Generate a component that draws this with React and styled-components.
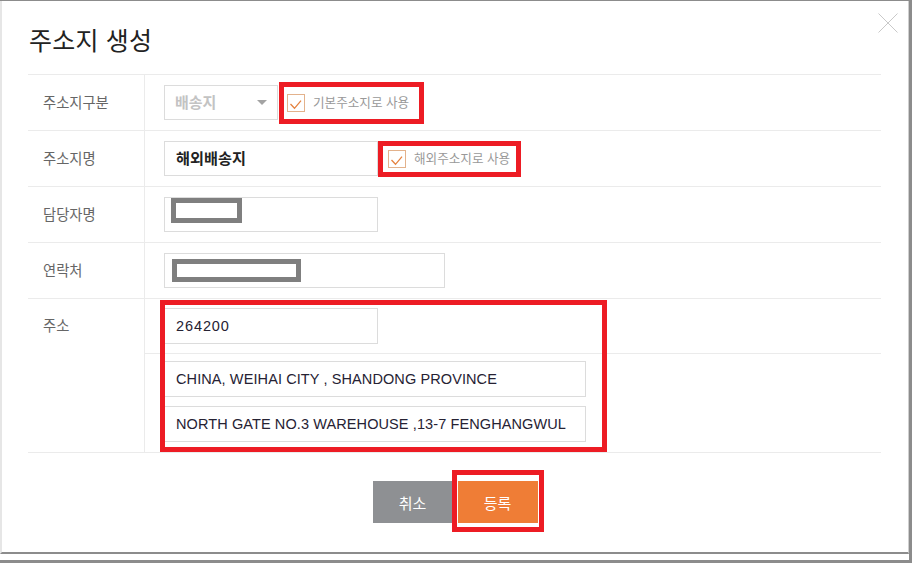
import styled, { createGlobalStyle } from 'styled-components';

const GlobalStyle = createGlobalStyle`
  html, body {
    margin: 0;
    padding: 0;
    background: #fff;
  }
  body {
    font-family: "Liberation Sans", "Noto Sans CJK KR", sans-serif;
  }
  * {
    box-sizing: border-box;
  }
`;

const Frame = styled.div`
  width: 912px;
  height: 563px;
  border-top: 1px solid #8c8c8c;
  border-right: 3px solid #8c8c8c;
  border-bottom: 3px solid #8c8c8c;
  background: #fff;
`;

const Modal = styled.div`
  height: 553px;
  border-left: 2px solid #e6e6e6;
  border-right: 1px solid #cfcfcf;
  border-bottom: 2px solid #8c8c8c;
  display: flex;
  flex-direction: column;
`;

const Header = styled.header`
  height: 73px;
  flex: none;
  display: flex;
  justify-content: space-between;
  align-items: flex-start;
  padding: 0 10px 0 27px;
`;

const Title = styled.h2`
  margin: 27px 0 0;
  font-size: 25px;
  line-height: 26px;
  font-weight: 400;
  color: #222;
  letter-spacing: 0.2px;
`;

const CloseButton = styled.button`
  margin-top: 12px;
  width: 20px;
  height: 20px;
  padding: 0;
  border: 0;
  background: none;
  cursor: pointer;
  svg {
    display: block;
  }
`;

const Table = styled.div`
  margin: 0 27px 0 26px;
  border-top: 1px solid #ebebeb;
`;

const Row = styled.div`
  display: grid;
  grid-template-columns: 117px 1fr;
  border-bottom: 1px solid #ebebeb;
`;

const Label = styled.div`
  height: 55px;
  border-right: 1px solid #ebebeb;
  padding-left: 15px;
  display: flex;
  align-items: center;
  font-size: 14.3px;
  line-height: 16px;
  color: #666;
  ${p => p.$tall && 'height: auto; align-items: flex-start; padding-top: 19px;'}
`;

const Cell = styled.div`
  height: 55px;
  padding-left: 19px;
  display: flex;
  align-items: center;
`;

const AddressCell = styled.div`
  position: relative;
  display: flex;
  flex-direction: column;
`;

const SubRow = styled.div`
  height: 55px;
  padding-left: 19px;
  display: flex;
  align-items: center;
  border-bottom: 1px solid #ebebeb;
`;

const SubStack = styled.div`
  padding: 7px 0 10px 19px;
  display: flex;
  flex-direction: column;
  gap: 9px;
`;

const Field = styled.div`
  width: ${p => p.$w}px;
  height: ${p => p.$h || 35}px;
  flex: none;
  border: 1px solid #dcdcdc;
  background: #fff;
  display: flex;
  align-items: center;
  padding: 0 11px;
  font-size: 14.5px;
  line-height: 18px;
  letter-spacing: 0.1px;
  color: #262233;
  white-space: nowrap;
  overflow: hidden;
`;

const Digits = styled.span`
  letter-spacing: 0.9px;
`;

const BoldValue = styled.span`
  font-size: 15.2px;
  font-weight: 700;
  letter-spacing: 0;
  color: #222;
`;

const Select = styled.div`
  width: 114px;
  height: 35px;
  flex: none;
  border: 1px solid #dcdcdc;
  display: flex;
  align-items: center;
  justify-content: space-between;
  padding: 0 10px;
  font-size: 15px;
  font-weight: 700;
  color: #c3c3c3;
  line-height: 18px;
`;

const Caret = styled.span`
  width: 0;
  height: 0;
  border-left: 5.5px solid transparent;
  border-right: 5.5px solid transparent;
  border-top: 5px solid #a3a3a3;
`;

const Highlight = styled.div`
  height: ${p => p.$h}px;
  margin-left: ${p => p.$ml || 0}px;
  border: 5px solid #ed1c24;
  display: flex;
  align-items: center;
  gap: 8px;
  padding: 0 ${p => p.$pr}px 0 ${p => p.$pl}px;
`;

const CheckLabel = styled.span`
  font-size: 12.6px;
  line-height: 14px;
  color: #999;
  white-space: nowrap;
`;

const Redacted = styled.span`
  display: block;
  width: ${p => p.$w}px;
  height: ${p => p.$h}px;
  margin: ${p => p.$top}px 0 0 ${p => p.$left}px;
  align-self: flex-start;
  border: 5px solid #7f7f7f;
  background: #fff;
`;

const PlainField = styled(Field)`
  padding: 0 6px;
`;

const AddressMark = styled.div`
  position: absolute;
  left: 15px;
  top: 1px;
  width: 447px;
  height: 152px;
  border: 5px solid #ed1c24;
  pointer-events: none;
`;

const Footer = styled.div`
  margin-top: 28px;
  display: flex;
  justify-content: center;
  gap: 5px;
`;

const Button = styled.button`
  position: relative;
  width: 80px;
  height: 42px;
  border: 0;
  padding: 0;
  font-family: inherit;
  font-size: 15px;
  color: #fff;
  background: ${p => (p.$primary ? '#ef7d36' : '#8e9093')};
  cursor: pointer;
  ${p =>
    p.$marked &&
    `
    &::after {
      content: '';
      position: absolute;
      top: -11px;
      left: -6px;
      right: -6px;
      bottom: -9px;
      border: 5px solid #ed1c24;
    }
  `}
`;

const Checkbox = () => (
  <svg width="18" height="18" viewBox="0 0 18 18">
    <rect x="0.5" y="0.5" width="17" height="17" fill="#fff" stroke="#e3b28c" />
    <polyline points="3.5,10 7.5,14.3 14,6.6" fill="none" stroke="#e5823f" strokeWidth="1.3" />
  </svg>
);

const CloseIcon = () => (
  <svg width="20" height="20" viewBox="0 0 20 20">
    <path d="M0.5 0.5 L19.5 19.5 M19.5 0.5 L0.5 19.5" stroke="#c9c9c9" strokeWidth="1" />
  </svg>
);

export default function App() {
  return (
    <>
      <GlobalStyle />
      <Frame>
        <Modal>
          <Header>
            <Title>주소지 생성</Title>
            <CloseButton aria-label="닫기">
              <CloseIcon />
            </CloseButton>
          </Header>

          <Table>
            <Row>
              <Label>주소지구분</Label>
              <Cell>
                <Select>
                  배송지
                  <Caret />
                </Select>
                <Highlight $h={42} $ml={1} $pl={3} $pr={10}>
                  <Checkbox />
                  <CheckLabel>기본주소지로 사용</CheckLabel>
                </Highlight>
              </Cell>
            </Row>

            <Row>
              <Label>주소지명</Label>
              <Cell>
                <Field $w={214}>
                  <BoldValue>해외배송지</BoldValue>
                </Field>
                <Highlight $h={36} $pl={5} $pr={6}>
                  <Checkbox />
                  <CheckLabel>해외주소지로 사용</CheckLabel>
                </Highlight>
              </Cell>
            </Row>

            <Row>
              <Label>담당자명</Label>
              <Cell>
                <PlainField $w={214}>
                  <Redacted $w={71} $h={25} $top={0} $left={0} />
                </PlainField>
              </Cell>
            </Row>

            <Row>
              <Label>연락처</Label>
              <Cell>
                <PlainField $w={281}>
                  <Redacted $w={129} $h={23} $top={5} $left={1} />
                </PlainField>
              </Cell>
            </Row>

            <Row>
              <Label $tall>주소</Label>
              <AddressCell>
                <SubRow>
                  <Field $w={214} $h={36}>
                    <Digits>264200</Digits>
                  </Field>
                </SubRow>
                <SubStack>
                  <Field $w={422} $h={36}>CHINA, WEIHAI CITY , SHANDONG PROVINCE</Field>
                  <Field $w={422} $h={36}>NORTH GATE NO.3 WAREHOUSE ,13-7 FENGHANGWUL</Field>
                </SubStack>
                <AddressMark />
              </AddressCell>
            </Row>
          </Table>

          <Footer>
            <Button>취소</Button>
            <Button $primary $marked>등록</Button>
          </Footer>
        </Modal>
      </Frame>
    </>
  );
}
